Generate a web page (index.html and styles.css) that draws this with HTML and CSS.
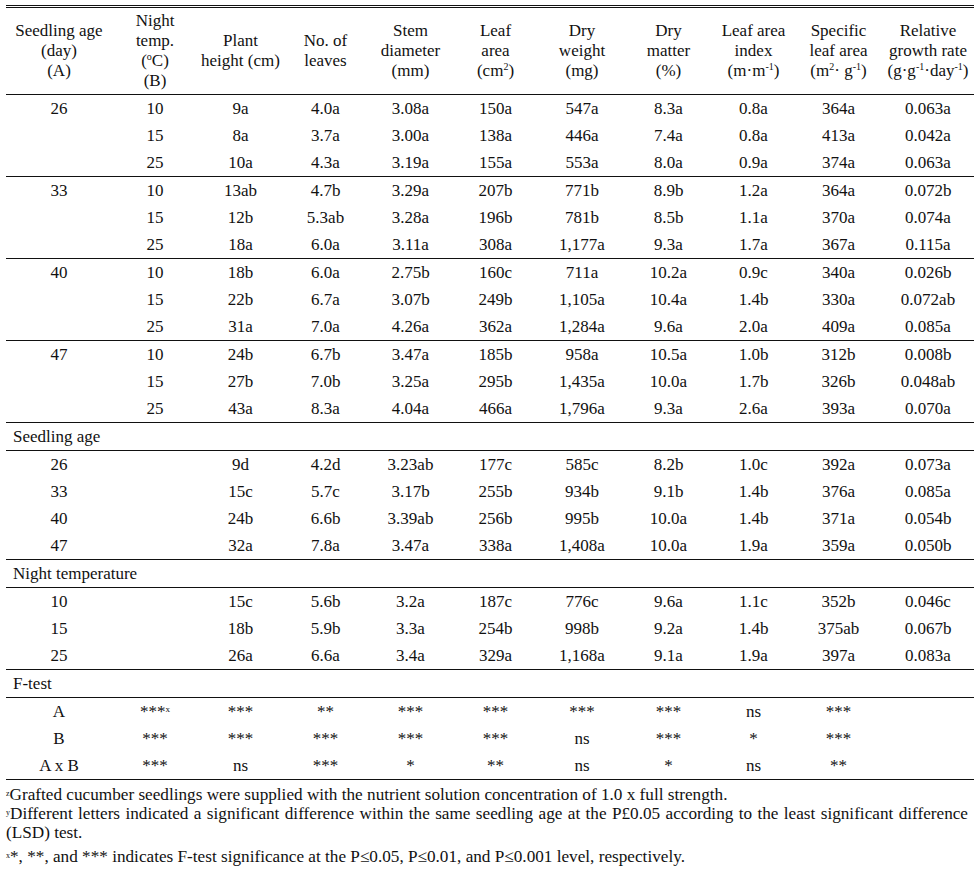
FILE: index.html
```html
<!DOCTYPE html>
<html lang="en">
  <head>
    <meta charset="UTF-8" />
    <meta name="viewport" content="width=device-width, initial-scale=1.0" />
    <title>Seedling age and night temperature table</title>
    <link rel="stylesheet" href="styles.css">
  </head>
  <body>
    <table class="data">
      <colgroup>
        <col class="c-age">
        <col class="c-temp">
        <col class="c-n"><col class="c-n"><col class="c-n"><col class="c-n">
        <col class="c-w"><col class="c-n"><col class="c-n"><col class="c-n">
        <col class="c-last">
      </colgroup>
      <thead>
        <tr>
          <th>Seedling age<br>(day)<br>(A)</th>
          <th>Night<br>temp.<br>(<sup>o</sup>C)<br>(B)</th>
          <th>Plant<br>height (cm)</th>
          <th>No. of<br>leaves</th>
          <th>Stem<br>diameter<br>(mm)</th>
          <th>Leaf<br>area<br>(cm<sup>2</sup>)</th>
          <th>Dry<br>weight<br>(mg)</th>
          <th>Dry<br>matter<br>(%)</th>
          <th>Leaf area<br>index<br>(m&middot;m<sup>-1</sup>)</th>
          <th>Specific<br>leaf area<br>(m<sup>2</sup>&middot; g<sup>-1</sup>)</th>
          <th>Relative<br>growth rate<br>(g&middot;g<sup>-1</sup>&middot;day<sup>-1</sup>)</th>
        </tr>
      </thead>
      <tbody>
        <tr><td>26</td><td>10</td><td>9a</td><td>4.0a</td><td>3.08a</td><td>150a</td><td>547a</td><td>8.3a</td><td>0.8a</td><td>364a</td><td>0.063a</td></tr>
        <tr><td></td><td>15</td><td>8a</td><td>3.7a</td><td>3.00a</td><td>138a</td><td>446a</td><td>7.4a</td><td>0.8a</td><td>413a</td><td>0.042a</td></tr>
        <tr class="end"><td></td><td>25</td><td>10a</td><td>4.3a</td><td>3.19a</td><td>155a</td><td>553a</td><td>8.0a</td><td>0.9a</td><td>374a</td><td>0.063a</td></tr>

        <tr><td>33</td><td>10</td><td>13ab</td><td>4.7b</td><td>3.29a</td><td>207b</td><td>771b</td><td>8.9b</td><td>1.2a</td><td>364a</td><td>0.072b</td></tr>
        <tr><td></td><td>15</td><td>12b</td><td>5.3ab</td><td>3.28a</td><td>196b</td><td>781b</td><td>8.5b</td><td>1.1a</td><td>370a</td><td>0.074a</td></tr>
        <tr class="end"><td></td><td>25</td><td>18a</td><td>6.0a</td><td>3.11a</td><td>308a</td><td>1,177a</td><td>9.3a</td><td>1.7a</td><td>367a</td><td>0.115a</td></tr>

        <tr><td>40</td><td>10</td><td>18b</td><td>6.0a</td><td>2.75b</td><td>160c</td><td>711a</td><td>10.2a</td><td>0.9c</td><td>340a</td><td>0.026b</td></tr>
        <tr><td></td><td>15</td><td>22b</td><td>6.7a</td><td>3.07b</td><td>249b</td><td>1,105a</td><td>10.4a</td><td>1.4b</td><td>330a</td><td>0.072ab</td></tr>
        <tr class="end"><td></td><td>25</td><td>31a</td><td>7.0a</td><td>4.26a</td><td>362a</td><td>1,284a</td><td>9.6a</td><td>2.0a</td><td>409a</td><td>0.085a</td></tr>

        <tr><td>47</td><td>10</td><td>24b</td><td>6.7b</td><td>3.47a</td><td>185b</td><td>958a</td><td>10.5a</td><td>1.0b</td><td>312b</td><td>0.008b</td></tr>
        <tr><td></td><td>15</td><td>27b</td><td>7.0b</td><td>3.25a</td><td>295b</td><td>1,435a</td><td>10.0a</td><td>1.7b</td><td>326b</td><td>0.048ab</td></tr>
        <tr class="end"><td></td><td>25</td><td>43a</td><td>8.3a</td><td>4.04a</td><td>466a</td><td>1,796a</td><td>9.3a</td><td>2.6a</td><td>393a</td><td>0.070a</td></tr>

        <tr class="end label"><td colspan="11">Seedling age</td></tr>
        <tr><td>26</td><td></td><td>9d</td><td>4.2d</td><td>3.23ab</td><td>177c</td><td>585c</td><td>8.2b</td><td>1.0c</td><td>392a</td><td>0.073a</td></tr>
        <tr><td>33</td><td></td><td>15c</td><td>5.7c</td><td>3.17b</td><td>255b</td><td>934b</td><td>9.1b</td><td>1.4b</td><td>376a</td><td>0.085a</td></tr>
        <tr><td>40</td><td></td><td>24b</td><td>6.6b</td><td>3.39ab</td><td>256b</td><td>995b</td><td>10.0a</td><td>1.4b</td><td>371a</td><td>0.054b</td></tr>
        <tr class="end"><td>47</td><td></td><td>32a</td><td>7.8a</td><td>3.47a</td><td>338a</td><td>1,408a</td><td>10.0a</td><td>1.9a</td><td>359a</td><td>0.050b</td></tr>

        <tr class="end label"><td colspan="11">Night temperature</td></tr>
        <tr><td>10</td><td></td><td>15c</td><td>5.6b</td><td>3.2a</td><td>187c</td><td>776c</td><td>9.6a</td><td>1.1c</td><td>352b</td><td>0.046c</td></tr>
        <tr><td>15</td><td></td><td>18b</td><td>5.9b</td><td>3.3a</td><td>254b</td><td>998b</td><td>9.2a</td><td>1.4b</td><td>375ab</td><td>0.067b</td></tr>
        <tr class="end"><td>25</td><td></td><td>26a</td><td>6.6a</td><td>3.4a</td><td>329a</td><td>1,168a</td><td>9.1a</td><td>1.9a</td><td>397a</td><td>0.083a</td></tr>

        <tr class="end label"><td colspan="11">F-test</td></tr>
        <tr><td>A</td><td>***<sup class="note">x</sup></td><td>***</td><td>**</td><td>***</td><td>***</td><td>***</td><td>***</td><td>ns</td><td>***</td><td></td></tr>
        <tr><td>B</td><td>***</td><td>***</td><td>***</td><td>***</td><td>***</td><td>ns</td><td>***</td><td>*</td><td>***</td><td></td></tr>
        <tr class="end"><td>A x B</td><td>***</td><td>ns</td><td>***</td><td>*</td><td>**</td><td>ns</td><td>*</td><td>ns</td><td>**</td><td></td></tr>
      </tbody>
    </table>

    <div class="notes">
      <p><sup>z</sup>Grafted cucumber seedlings were supplied with the nutrient solution concentration of 1.0 x full strength.</p>
      <p class="just"><sup>y</sup><span>Different letters indicated a significant difference within the same seedling age at the P&pound;0.05 according to the least significant difference</span> <span>(LSD)&nbsp;test.</span></p>
      <p class="last"><sup>x</sup>*, **, and *** indicates F-test significance at the P&le;0.05, P&le;0.01, and P&le;0.001 level, respectively.</p>
    </div>
  </body>
</html>
```

FILE: styles.css
```css
body {
  margin: 0;
  padding: 5px 0 0 6px;
  font-family: "Liberation Serif", "Times New Roman", serif;
  color: #111;
  background: #fff;
  overflow: hidden;
}

.data {
  border-collapse: collapse;
  width: 968px;
  table-layout: fixed;
  font-size: 17px;
  border-top: 3px double #111;
}

.c-age { width: 106px; }
.c-temp { width: 86px; }
.c-n { width: 85px; }
.c-w { width: 88px; }
.c-last { width: 94px; }

.data th {
  font-weight: normal;
  line-height: 20px;
  height: 86px;
  padding: 0;
  vertical-align: middle;
  border-bottom: 1px solid #111;
}

.data td {
  height: 27px;
  padding: 0;
  text-align: center;
  vertical-align: middle;
  line-height: 20px;
  white-space: nowrap;
}

.data tr.end td {
  border-bottom: 1px solid #111;
}

.data tr.label td {
  text-align: left;
  padding-left: 7px;
}

.data sup {
  font-size: 10px;
  line-height: 0;
  vertical-align: 6px;
}

.data sup.note {
  font-size: 9px;
  vertical-align: 5px;
}

.notes {
  width: 962px;
  font-size: 17.2px;
  line-height: 19px;
  padding-top: 5px;
}

.notes p {
  margin: 0;
}

.notes .just {
  text-align: justify;
}

.notes .last {
  margin-top: 5px;
}

.notes sup {
  font-size: 8px;
  line-height: 0;
  vertical-align: 4px;
}
```
